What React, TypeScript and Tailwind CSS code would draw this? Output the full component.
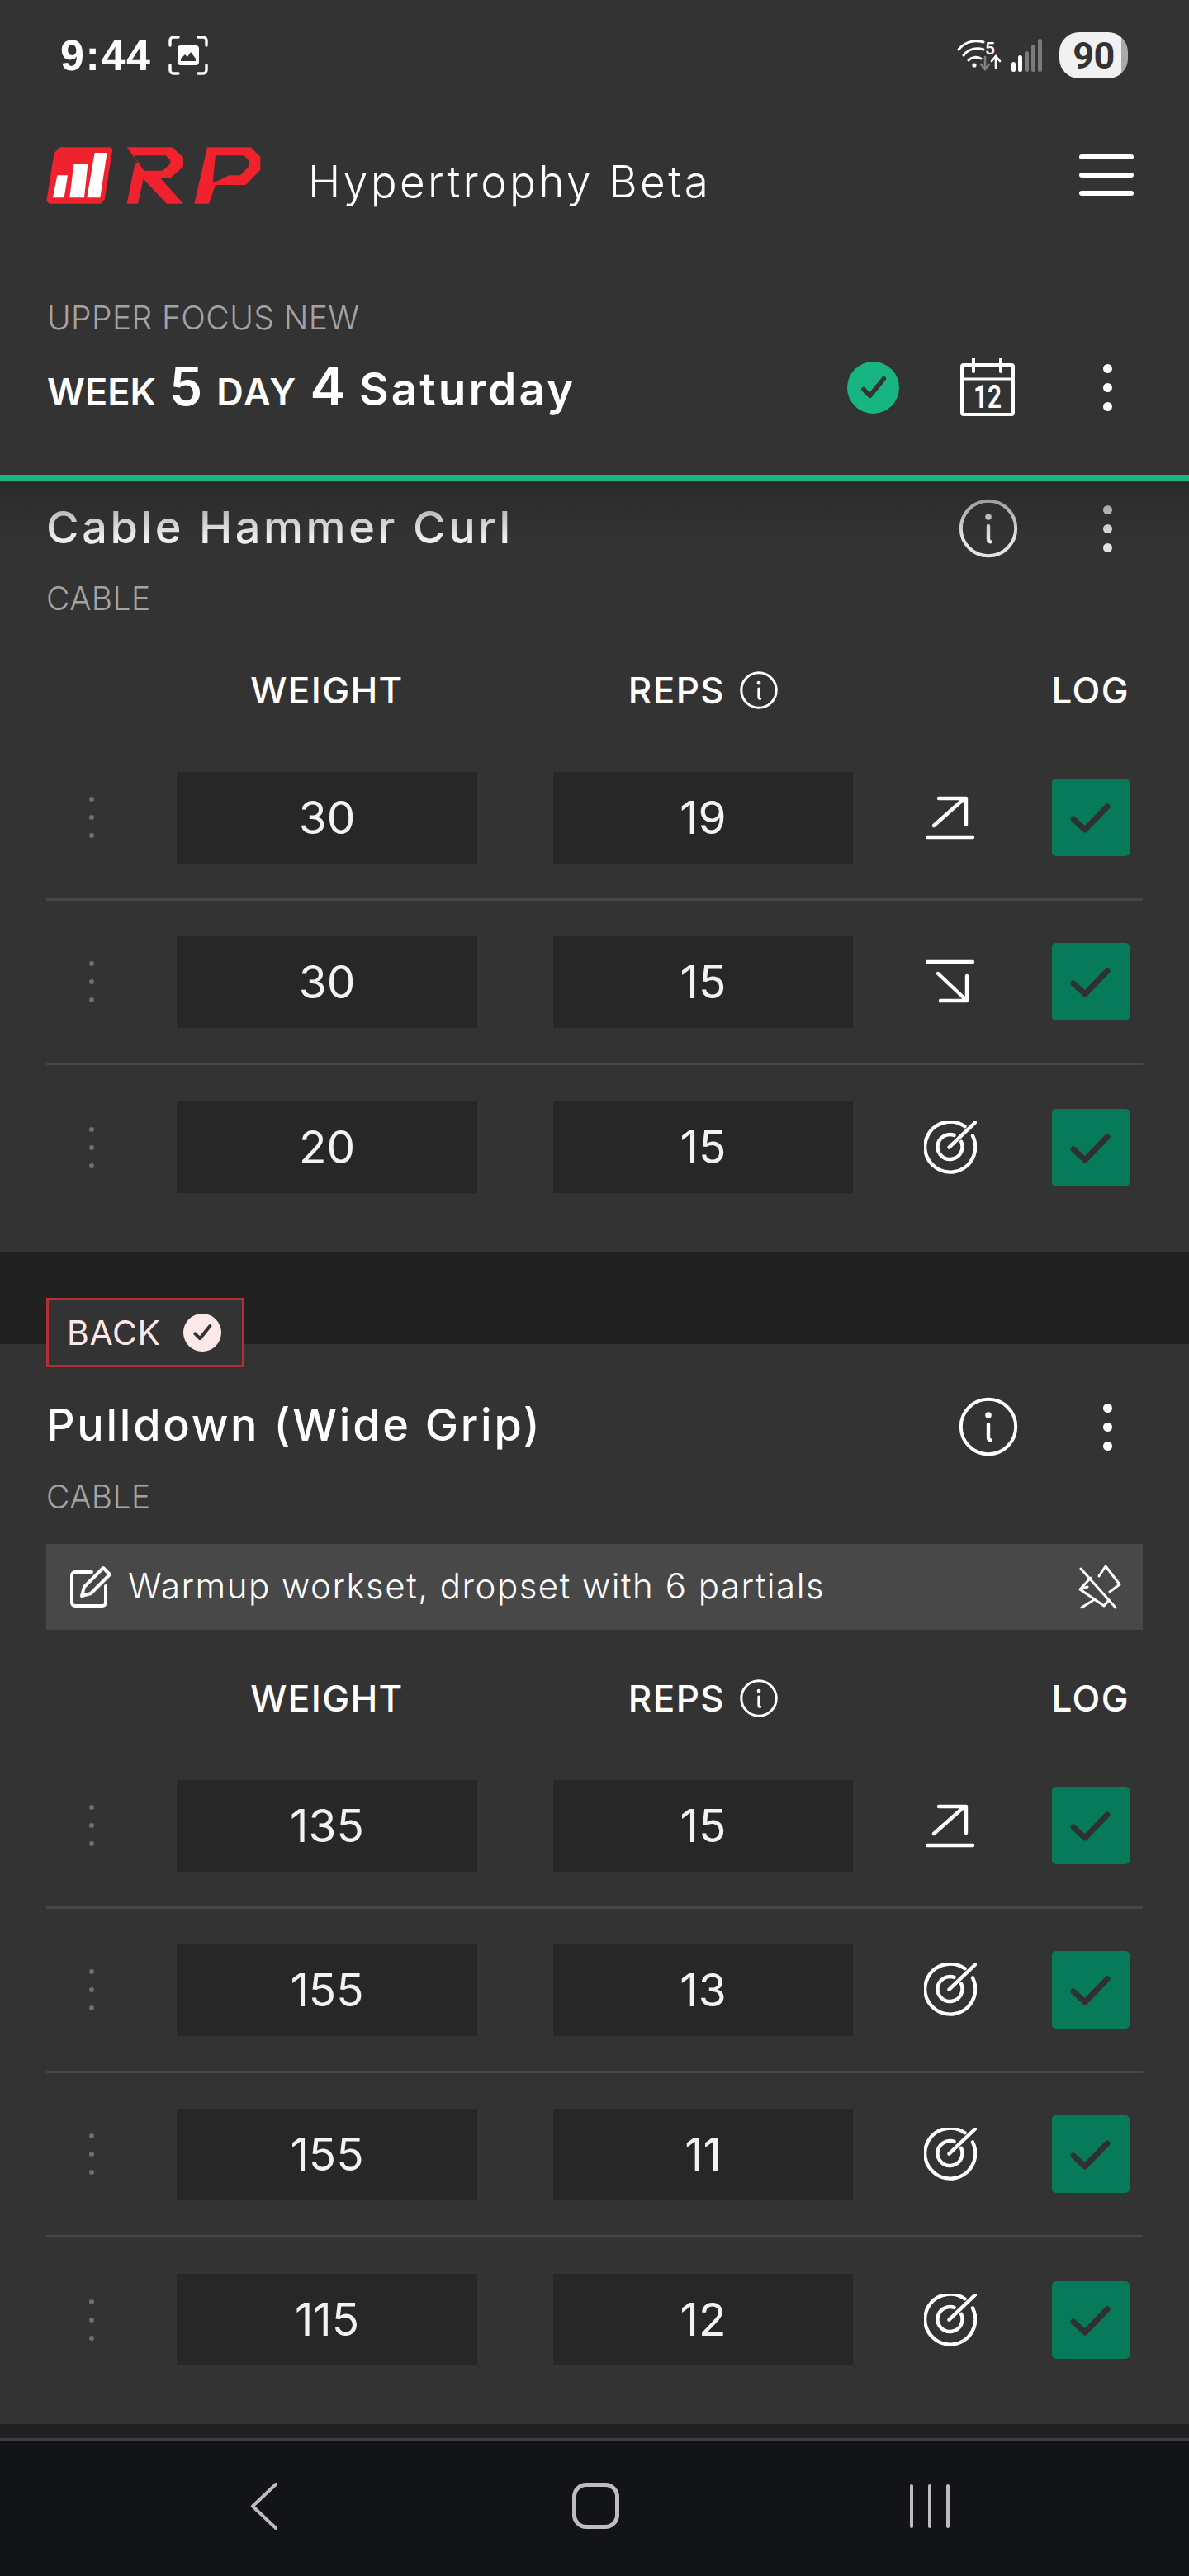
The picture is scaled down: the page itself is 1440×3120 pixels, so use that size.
import React from "react";

const F = "font-['Inter','Noto_Sans',sans-serif]";

function Dots({ dim }: { dim?: boolean }) {
  const c = dim ? "bg-[#e2e2e2]" : "bg-white";
  return (
    <div className="flex w-[11px] flex-col gap-[12px]">
      <div className={`h-[11px] w-[11px] rounded-full ${c}`} />
      <div className={`h-[11px] w-[11px] rounded-full ${c}`} />
      <div className={`h-[11px] w-[11px] rounded-full ${c}`} />
    </div>
  );
}

function InfoIcon({ size = 72, color = "#fff", sw = 2 }: { size?: number; color?: string; sw?: number }) {
  return (
    <svg width={size} height={size} viewBox="0 0 36 36" fill="none" stroke={color} strokeWidth={sw} strokeLinecap="round">
      <circle cx="18" cy="18" r="16.6" />
      <circle cx="18" cy="11" r="1.9" fill={color} stroke="none" />
      <path d="M18 16.5v8c0 1 .5 1.5 1.2 1.6" strokeWidth={sw + 0.2} />
    </svg>
  );
}

function Logo() {
  return (
    <svg width="260" height="69" viewBox="108 84 778 207">
      <path fill="#f0222e" d="M158 85H340L348 93L319 275L304 290H118L108 280L136 105Z" />
      <path fill="#fff" d="M147 187H185L172 268H131Z M207 147H258L245 268H192Z M283 105H328L303 268H255Z" />
      <path
        fill="#f0222e"
        fillRule="evenodd"
        d="M400 85H565L605 122V155L560 195H520L605 290H545L460 200L440 290H400L428 150L440 140Z M425 115L462 170H530L558 145V132L542 115Z"
      />
      <path
        fill="#f0222e"
        fillRule="evenodd"
        d="M692 85H850L885 120V167L832 222H722L698 290H645Z M722 115L712 215L772 187H812L845 152V135L825 115Z"
      />
    </svg>
  );
}

function ShotIcon() {
  return (
    <svg width="48" height="48" viewBox="0 0 48 48" fill="none">
      <path
        d="M2 12V6a4 4 0 0 1 4-4h6 M36 2h6a4 4 0 0 1 4 4v6 M46 36v6a4 4 0 0 1-4 4h-6 M12 46H6a4 4 0 0 1-4-4v-6"
        stroke="#fff"
        strokeWidth="3.4"
        strokeLinecap="round"
      />
      <rect x="11" y="12" width="26" height="24" rx="4" fill="#fff" />
      <path d="M15 31v-3l5-5 3 3 4-6 6 8v3z" fill="#333" />
    </svg>
  );
}

function WifiIcon() {
  return (
    <svg width="56" height="40" viewBox="0 0 56 40" fill="none" strokeLinecap="round">
      <path d="M2 13C10 3 22 1 32 4 M8 20C14 12 24 10 32 13 M14 26c4-4 10-5 15-2" stroke="#fff" strokeWidth="3" />
      <circle cx="21" cy="32" r="2.6" fill="#fff" />
      <path d="M34 22v14M29 31l5 6 5-6" stroke="#808080" strokeWidth="2.6" />
      <path d="M47 35V22M42 27l5-6 5 6" stroke="#fff" strokeWidth="2.6" />
      <text x="34" y="19" fontSize="21" fontWeight="600" fill="#fff" fontFamily="Roboto, sans-serif">5</text>
    </svg>
  );
}

function SignalIcon() {
  return (
    <div className="flex h-[40px] w-[37px] items-end justify-between">
      <div className="h-[12px] w-[5px] rounded-full bg-white" />
      <div className="h-[20px] w-[5px] rounded-full bg-white" />
      <div className="h-[25px] w-[5px] rounded-full bg-[#7b7b7b]" />
      <div className="h-[33px] w-[5px] rounded-full bg-[#7b7b7b]" />
      <div className="h-[40px] w-[5px] rounded-full bg-[#7b7b7b]" />
    </div>
  );
}

function CalendarIcon() {
  return (
    <svg width="66" height="71" viewBox="0 0 66 71" fill="none" stroke="#fff">
      <rect x="2" y="8" width="62" height="60" rx="2" strokeWidth="4" />
      <path d="M1 25h64" strokeWidth="3" />
      <path d="M16 1v15M49 1v15" strokeWidth="4" strokeLinecap="round" />
      <text x="33" y="60" textAnchor="middle" fontSize="38" fontWeight="700" fill="#fff" stroke="none" fontFamily="Roboto, sans-serif" textLength="34" lengthAdjust="spacingAndGlyphs">12</text>
    </svg>
  );
}

function CheckCircle({ size, bg, fg }: { size: number; bg: string; fg: string }) {
  return (
    <svg width={size} height={size} viewBox="0 0 32 32">
      <circle cx="16" cy="16" r="16" fill={bg} />
      <path d="M10 17l4 4L22.5 10.5" fill="none" stroke={fg} strokeWidth="2.8" strokeLinecap="round" strokeLinejoin="round" />
    </svg>
  );
}

function Up() {
  return (
    <svg width="60" height="54" viewBox="0 0 60 54" fill="none" stroke="#fff" strokeLinecap="round" strokeLinejoin="round">
      <path d="M2 51h55 M10 37L47 4 M16 4h33v32" strokeWidth="4.4" />
    </svg>
  );
}

function Down() {
  return (
    <svg width="60" height="54" viewBox="0 0 60 54" fill="none" stroke="#fff" strokeLinecap="round" strokeLinejoin="round">
      <path d="M2 3h55 M15 17l35 33 M18 50h32V20" strokeWidth="4.4" />
    </svg>
  );
}

function Target() {
  return (
    <svg width="64" height="64" viewBox="0 0 64 64" fill="none" stroke="#fff" strokeWidth="4.4" strokeLinecap="round">
      <path d="M59 17.4A30.5 30.5 0 1 1 49.5 6.3" />
      <path d="M45.1 24.7A15 15 0 1 1 36.6 16.9" />
      <path d="M30.5 31.7L62 1.5" />
    </svg>
  );
}

function BoxCheck() {
  return (
    <div className="flex h-[94px] w-[94px] items-center justify-center rounded-[5px] bg-[#077a5a]">
      <svg width="50" height="38" viewBox="0 0 50 38" fill="none" stroke="#303030" strokeWidth="7" strokeLinecap="round" strokeLinejoin="round">
        <path d="M4 21l14 13L45 6" />
      </svg>
    </div>
  );
}

function PinOff() {
  return (
    <svg width="54" height="54" viewBox="0 0 54 54" fill="none" stroke="#fff" strokeWidth="3" strokeLinecap="round" strokeLinejoin="round">
      <path d="M4 5L46 52 M26 14L34 2L51 24L39 33" />
      <path d="M16 16L3 30L32 50L38 43 M3 30 L12 27 M21 42L5 52" />
    </svg>
  );
}

function Pencil() {
  return (
    <svg width="52" height="52" viewBox="0 0 52 52" fill="none" stroke="#fff" strokeWidth="4" strokeLinecap="round" strokeLinejoin="round">
      <path d="M27 8H7a4 4 0 0 0-4 4v33a4 4 0 0 0 4 4h33a4 4 0 0 0 4-4V25" />
      <path d="M41 3l8 8-23 23-11 3 3-11z" />
    </svg>
  );
}

function Handle() {
  return (
    <div className="flex flex-col gap-[16px] pl-[52px]">
      <div className="h-[6px] w-[6px] rounded-full bg-[#6e6e6e]" />
      <div className="h-[6px] w-[6px] rounded-full bg-[#6e6e6e]" />
      <div className="h-[6px] w-[6px] rounded-full bg-[#6e6e6e]" />
    </div>
  );
}

const GRID = "grid grid-cols-[158px_364px_92px_363px_241px_94px] items-center";

function HeaderRow() {
  return (
    <div className={`${GRID} h-[50px] text-[44px] leading-[50px] font-medium tracking-[1.4px] text-white`}>
      <div />
      <div className="text-center">WEIGHT</div>
      <div />
      <div className="flex items-center justify-center gap-[18px]">
        <span>REPS</span>
        <InfoIcon size={46} sw={2.4} />
      </div>
      <div />
      <div className="flex justify-end whitespace-nowrap">LOG</div>
    </div>
  );
}

function Row({ w, r, icon, last }: { w: string; r: string; icon: React.ReactNode; last?: boolean }) {
  return (
    <div className={`${GRID} h-[199px] ${last ? "" : "border-b-[3px] border-[#474747]"}`}>
      <Handle />
      <div className="flex h-[111px] items-center justify-center bg-[#272727] text-[55px] text-[#f2f2f2]">{w}</div>
      <div />
      <div className="flex h-[111px] items-center justify-center bg-[#272727] text-[55px] text-[#f2f2f2]">{r}</div>
      <div className="flex justify-center pr-[6px]">{icon}</div>
      <BoxCheck />
    </div>
  );
}

export default function App() {
  return (
    <div className={`flex h-[3120px] w-[1440px] flex-col overflow-hidden bg-[#333333] ${F}`}>
      {/* status */}
      <div className="flex h-[134px] items-center pl-[73px] pr-[74px]">
        <span className="font-['Liberation_Sans',sans-serif] text-[52px] leading-none font-bold tracking-[1.6px] text-white">9:44</span>
        <div className="ml-[21px]">
          <ShotIcon />
        </div>
        <div className="ml-auto flex items-center">
          <WifiIcon />
          <div className="ml-[10px]">
            <SignalIcon />
          </div>
          <div className="ml-[21px] flex h-[56px] w-[83px] items-center justify-center rounded-[24px] bg-[linear-gradient(90deg,#f1f1f1_90%,#a9a9a9_90%)] font-['Roboto',sans-serif] text-[45px] leading-none font-bold tracking-[-0.5px] text-[#333]">
            90
          </div>
        </div>
      </div>

      {/* app bar */}
      <div className="flex h-[156px] items-center pl-[56px] pr-[67px]">
        <Logo />
        <span className="ml-[57px] mt-[16px] text-[53px] leading-none font-light tracking-[3.4px] text-white">Hypertrophy Beta</span>
        <div className="ml-auto flex w-[66px] flex-col gap-[16px]">
          <div className="h-[6px] rounded-full bg-white" />
          <div className="h-[6px] rounded-full bg-white" />
          <div className="h-[6px] rounded-full bg-white" />
        </div>
      </div>

      {/* plan */}
      <div className="h-[285px] pl-[57px] pr-[93px] pt-[70px]">
        <div className="h-[50px] text-[39px] leading-[50px] font-light tracking-[0.4px] text-[#a3a3a3]">UPPER FOCUS NEW</div>
        <div className="mt-[24px] flex h-[70px] items-center">
          <div className="-mt-[3px] flex items-baseline text-white font-semibold whitespace-nowrap">
            <span className="text-[45px]">WEEK</span>
            <span className="ml-[16px] text-[64px]">5</span>
            <span className="ml-[17px] text-[45px] tracking-[2px]">DAY</span>
            <span className="ml-[15px] text-[64px]">4</span>
            <span className="ml-[17px] text-[55px] tracking-[3px]">Saturday</span>
          </div>
          <div className="ml-auto">
            <CheckCircle size={63} bg="#17b581" fg="#333" />
          </div>
          <div className="ml-[74px]">
            <CalendarIcon />
          </div>
          <div className="ml-[107px]">
            <Dots />
          </div>
        </div>
      </div>

      <div className="h-[7px] shrink-0 bg-[#17b581]" />

      {/* cable hammer curl */}
      <div className="relative px-[56px] pt-[22px] pb-[27px]">
        <div className="absolute inset-x-0 top-0 h-[70px] bg-[linear-gradient(180deg,rgba(35,35,35,0.55),rgba(51,51,51,0))]" />
        <div className="flex h-[72px] items-center">
          <span className="-mt-[3px] text-[54px] leading-none font-medium tracking-[3.6px] text-[#efefef]">Cable Hammer Curl</span>
          <div className="ml-auto mr-[103px]">
            <InfoIcon color="#e4e4e4" />
          </div>
          <div className="mr-[37px]">
            <Dots dim />
          </div>
        </div>
        <div className="mt-[24px] h-[50px] text-[39px] leading-[50px] font-light tracking-[0.4px] text-[#a3a3a3]">CABLE</div>
        <div className="mt-[61px]">
          <HeaderRow />
        </div>
        <div className="mt-[31px]">
          <Row w="30" r="19" icon={<Up />} />
          <Row w="30" r="15" icon={<Down />} />
          <Row w="20" r="15" icon={<Target />} last />
        </div>
      </div>

      <div className="h-[112px] shrink-0 bg-[#212121]" />

      {/* pulldown */}
      <div className="bg-[#333333] px-[56px] pb-[27px]">
        <div className="relative -mt-[56px] flex h-[84px] w-[240px] items-center gap-[27px] border-[3px] border-[#b23033] bg-[#333333] pl-[22px]">
          <span className="text-[41px] leading-none tracking-[0.6px] text-[#fde8e8]">BACK</span>
          <CheckCircle size={46} bg="#fde8e8" fg="#333" />
        </div>
        <div className="mt-[36px] flex h-[72px] items-center">
          <span className="-mt-[5px] text-[54px] leading-none font-medium tracking-[2.7px] text-white">Pulldown (Wide Grip)</span>
          <div className="ml-auto mr-[103px]">
            <InfoIcon />
          </div>
          <div className="mr-[37px]">
            <Dots />
          </div>
        </div>
        <div className="mt-[24px] h-[50px] text-[39px] leading-[50px] font-light tracking-[0.4px] text-[#a3a3a3]">CABLE</div>
        <div className="mt-[32px] flex h-[104px] items-center bg-[#484848] pl-[28px] pr-[25px]">
          <Pencil />
          <span className="ml-[19px] -mt-[2px] text-[42px] leading-none font-light tracking-[1.5px] text-white">Warmup workset, dropset with 6 partials</span>
          <div className="ml-auto">
            <PinOff />
          </div>
        </div>
        <div className="mt-[58px]">
          <HeaderRow />
        </div>
        <div className="mt-[31px]">
          <Row w="135" r="15" icon={<Up />} />
          <Row w="155" r="13" icon={<Target />} />
          <Row w="155" r="11" icon={<Target />} />
          <Row w="115" r="12" icon={<Target />} last />
        </div>
      </div>

      <div className="h-[17px] shrink-0 bg-[#212121]" />
      <div className="h-[4px] shrink-0 bg-[#3b3d40]" />

      {/* nav */}
      <div className="flex flex-1 items-start bg-[#121418] pt-[50px]">
        <div className="ml-[303px]">
          <svg width="33" height="57" viewBox="0 0 33 57" fill="none" stroke="#bdbdbd" strokeWidth="4" strokeLinecap="round" strokeLinejoin="round">
            <path d="M31 2L3 28.5L31 55" />
          </svg>
        </div>
        <div className="ml-[357px] h-[56px] w-[57px] rounded-[17px] border-[5px] border-[#bdbdbd]" />
        <div className="ml-[352px] mt-[2px] flex gap-[18px]">
          <div className="h-[53px] w-[4px] rounded-full bg-[#bdbdbd]" />
          <div className="h-[53px] w-[4px] rounded-full bg-[#bdbdbd]" />
          <div className="h-[53px] w-[4px] rounded-full bg-[#bdbdbd]" />
        </div>
      </div>
    </div>
  );
}
